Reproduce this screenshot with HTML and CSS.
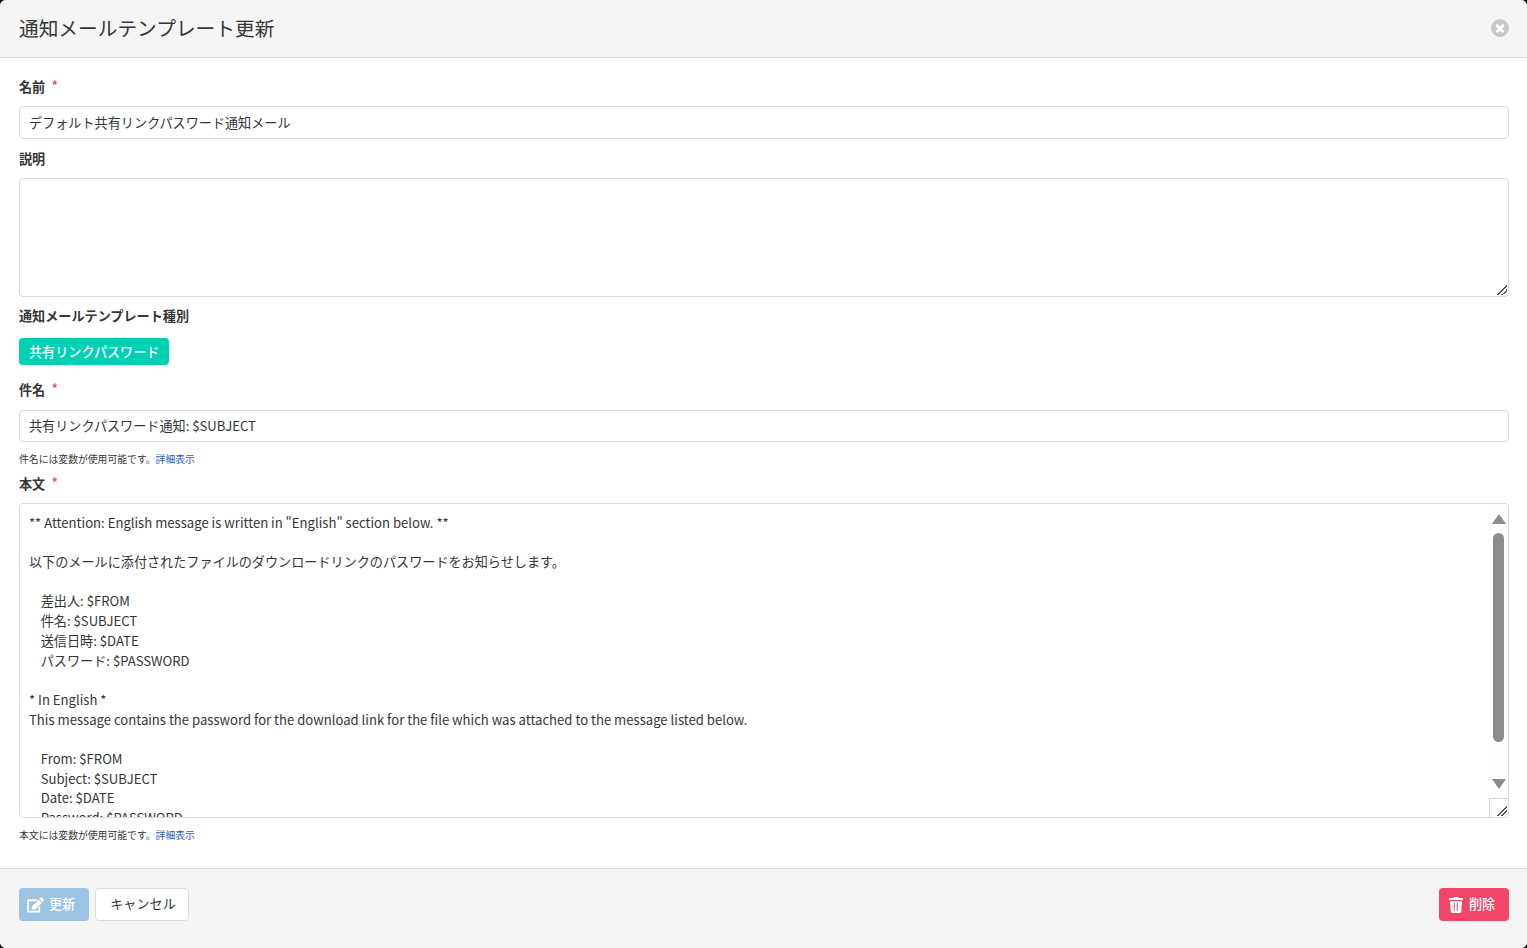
FILE: index.html
```html
<!DOCTYPE html>
<html lang="ja">
<head>
<meta charset="utf-8">
<title>通知メールテンプレート更新</title>
<link rel="stylesheet" href="styles.css">
</head>
<body>
<div class="modal-card">
  <header class="card-head">
    <p class="card-title">通知メールテンプレート更新</p>
    <button class="delete" aria-label="close"></button>
  </header>
  <section class="card-body">
    <div class="label-row name-label"><label class="label">名前</label><span class="req">*</span></div>
    <input class="input name" type="text" value="デフォルト共有リンクパスワード通知メール">
    <div class="label-row desc-label"><label class="label">説明</label></div>
    <textarea class="textarea desc"></textarea>
    <div class="label-row type-label"><label class="label">通知メールテンプレート種別</label></div>
    <div class="tag-row"><span class="tag">共有リンクパスワード</span></div>
    <div class="label-row subject-label"><label class="label">件名</label><span class="req">*</span></div>
    <input class="input subject" type="text" value="共有リンクパスワード通知: $SUBJECT">
    <p class="help subject-help">件名には変数が使用可能です。<a href="#">詳細表示</a></p>
    <div class="label-row body-label"><label class="label">本文</label><span class="req">*</span></div>
    <div class="mail-wrap">
      <textarea class="textarea mail">** Attention: English message is written in "English" section below. **

以下のメールに添付されたファイルのダウンロードリンクのパスワードをお知らせします。

    差出人: $FROM
    件名: $SUBJECT
    送信日時: $DATE
    パスワード: $PASSWORD

* In English *
This message contains the password for the download link for the file which was attached to the message listed below.

    From: $FROM
    Subject: $SUBJECT
    Date: $DATE
    Password: $PASSWORD
</textarea>
      <div class="scrollbar" aria-hidden="true">
        <div class="sb-up"><span class="arrow-up"></span></div>
        <div class="sb-track"><div class="sb-thumb"></div></div>
        <div class="sb-down"><span class="arrow-down"></span></div>
        <div class="sb-corner"></div>
      </div>
    </div>
    <p class="help body-help">本文には変数が使用可能です。<a href="#">詳細表示</a></p>
  </section>
  <footer class="card-foot">
    <div class="foot-left">
      <button class="button primary">
        <svg class="icon" viewBox="0 0 576 512"><path fill="currentColor" d="M402.6 83.2l90.2 90.2c3.8 3.8 3.8 10 0 13.8L274.4 405.6l-92.8 10.3c-12.4 1.4-22.9-9.1-21.5-21.5l10.3-92.8L388.8 83.2c3.8-3.8 10-3.8 13.8 0zm162-22.9l-48.8-48.8c-15.2-15.2-39.9-15.2-55.2 0l-35.4 35.4c-3.8 3.8-3.8 10 0 13.8l90.2 90.2c3.8 3.8 10 3.8 13.8 0l35.4-35.4c15.2-15.3 15.2-40 0-55.2zM384 346.2V448H64V128h229.8c3.2 0 6.2-1.3 8.5-3.5l40-40c7.6-7.6 2.2-20.5-8.5-20.5H48C21.5 64 0 85.5 0 112v352c0 26.5 21.5 48 48 48h352c26.5 0 48-21.5 48-48V306.2c0-10.7-12.9-16-20.5-8.5l-40 40c-2.2 2.3-3.5 5.3-3.5 8.5z"/></svg>
        <span class="btn-text">更新</span>
      </button>
      <button class="button plain">キャンセル</button>
    </div>
    <button class="button danger">
      <svg class="icon trash" viewBox="0 0 448 512"><path fill="currentColor" d="M432 32H312l-9.4-18.7A24 24 0 0 0 281.1 0H166.8a23.72 23.72 0 0 0-21.4 13.3L136 32H16A16 16 0 0 0 0 48v32a16 16 0 0 0 16 16h416a16 16 0 0 0 16-16V48a16 16 0 0 0-16-16zM53.2 467a48 48 0 0 0 47.9 45h245.8a48 48 0 0 0 47.9-45L416 128H32zM152 200a16 16 0 0 1 32 0v224a16 16 0 0 1-32 0zm96 0a16 16 0 0 1 32 0v224a16 16 0 0 1-32 0z"/></svg>
      <span class="btn-text">削除</span>
    </button>
  </footer>
</div>
</body>
</html>
```
FILE: styles.css
```css
html {
  font-size: 13.125px;
  background: #0a0a0a;
}
* { box-sizing: border-box; }
body {
  margin: 0;
  height: 948px;
  overflow: hidden;
  font-family: "Noto Sans CJK JP", "Noto Sans", sans-serif;
  color: #363636;
  line-height: 1.5;
}
.modal-card {
  height: 948px;
  display: flex;
  flex-direction: column;
  border-radius: 6px;
  overflow: hidden;
  background: #fff;
}
.card-head {
  height: 58px;
  flex: none;
  display: flex;
  align-items: center;
  justify-content: space-between;
  padding: 0 18px 2px 19px;
  background: #f5f5f5;
  border-bottom: 1px solid #dbdbdb;
}
.card-title {
  margin: 0;
  font-size: 19.69px;
  line-height: 1;
  color: #363636;
}
.delete {
  width: 18px;
  height: 18px;
  margin-top: 1px;
  padding: 0;
  border: 0;
  border-radius: 50%;
  background: rgba(10, 10, 10, 0.2);
  position: relative;
}
.delete::before,
.delete::after {
  content: "";
  position: absolute;
  left: 4px;
  top: 7.75px;
  width: 10px;
  height: 2.5px;
  background: #fff;
  transform: rotate(45deg);
}
.delete::after { transform: rotate(-45deg); }
.card-body {
  flex: 1;
  display: flex;
  flex-direction: column;
  padding: 19px 18px 0 19px;
  min-height: 0;
}
.label-row {
  display: flex;
  height: 19.5px;
  flex: none;
}
.label {
  font-weight: 700;
  font-size: 13.125px;
  line-height: 19.5px;
  color: #363636;
}
.req {
  margin-left: 6px;
  color: #f14668;
  font-size: 15px;
  line-height: 18px;
}
.input,
.textarea {
  display: block;
  width: 100%;
  font: inherit;
  font-size: 13.125px;
  color: #363636;
  background: #fff;
  border: 1px solid #dbdbdb;
  border-radius: 4px;
  outline: none;
  flex: none;
}
.input {
  height: 32.5px;
  padding: 0 9px;
}
.name { height: 33px; }
.textarea {
  padding: 8.625px 9px;
  line-height: 19.69px;
  resize: vertical;
}
.name-label { margin-bottom: 9px; }
.desc-label { margin-top: 10px; margin-bottom: 9.5px; }
.desc { height: 119px; }
.type-label { margin-top: 9.5px; margin-bottom: 12.5px; }
.tag-row { display: flex; flex: none; }
.tag {
  height: 27px;
  padding: 0 10px;
  display: inline-flex;
  align-items: center;
  background: #00d1b2;
  color: #fff;
  font-size: 13.125px;
  font-weight: 500;
  border-radius: 4px;
}
.subject-label { margin-top: 15px; margin-bottom: 10.5px; }
.subject { height: 32px; padding-bottom: 2px; }
.help {
  margin: 0;
  font-size: 9.84px;
  line-height: 14.6px;
  color: #363636;
}
.help a { color: #3160b5; text-decoration: none; }
.subject-help { margin-top: 9.5px; }
.body-label { margin-top: 8px; margin-bottom: 9.5px; }
.mail-wrap {
  position: relative;
  flex: none;
  height: 315px;
}
.mail { height: 315px; }
.body-help { margin-top: 10px; }

.desc::-webkit-resizer {
  background-image: linear-gradient(135deg, transparent 46%, #555 46% 56%, transparent 56% 70%, #555 70% 80%, transparent 80%);
  background-repeat: no-repeat;
  background-size: 10px 10px;
  background-position: right 1px bottom 1px;
}

/* drawn scrollbar over the mail body */
.scrollbar {
  position: absolute;
  top: 1px;
  right: 1px;
  bottom: 1px;
  width: 19px;
  display: flex;
  flex-direction: column;
  background: #fdfdfd;
  border-radius: 0 3px 3px 0;
  pointer-events: none;
}
.sb-up,
.sb-down {
  flex: none;
  display: flex;
  justify-content: center;
}
.sb-up { height: 29px; padding-top: 10px; }
.sb-down { height: 28px; padding-top: 9px; }
.arrow-up,
.arrow-down {
  width: 0;
  height: 0;
  border-left: 7px solid transparent;
  border-right: 7px solid transparent;
}
.arrow-up { border-bottom: 10px solid #8c8c8c; }
.arrow-down { border-top: 10px solid #8c8c8c; }
.sb-track {
  flex: 1;
  display: flex;
  justify-content: center;
}
.sb-thumb {
  width: 11px;
  height: 209px;
  border-radius: 6px;
  background: #8c8c8c;
}
.sb-corner {
  flex: none;
  height: 19px;
  background-color: #fff;
  border-left: 1px solid #d5d5d5;
  border-top: 1px solid #d5d5d5;
  border-radius: 0 0 3px 0;
  background-image: linear-gradient(135deg, transparent 46%, #555 46% 56%, transparent 56% 70%, #555 70% 80%, transparent 80%);
  background-repeat: no-repeat;
  background-size: 10px 10px;
  background-position: right 1px bottom 1px;
}

.card-foot {
  height: 80px;
  flex: none;
  display: flex;
  justify-content: space-between;
  align-items: flex-start;
  padding: 19px 18px 0 19px;
  background: #f5f5f5;
  border-top: 1px solid #dbdbdb;
}
.foot-left {
  display: flex;
  gap: 6px;
}
.button {
  height: 33px;
  display: inline-flex;
  align-items: center;
  font: inherit;
  font-size: 13.125px;
  line-height: 1;
  white-space: nowrap;
  border-radius: 4px;
  border: 1px solid transparent;
  padding: 0 0 2px;
}
.btn-text { margin-left: 6px; }
.primary {
  width: 70px;
  padding-left: 7px;
  background: #9cc3e3;
  color: #fff;
  font-weight: 500;
}
.primary .btn-text { margin-left: 5px; }
.plain {
  width: 94px;
  justify-content: center;
  padding-left: 2px;
  background: #fff;
  border-color: #dbdbdb;
  color: #363636;
}
.danger {
  width: 70px;
  padding-left: 9px;
  background: #f14668;
  color: #fff;
  font-weight: 500;
}
.icon {
  width: 17px;
  height: 16px;
  flex: none;
  margin-top: 2px;
}
.trash {
  width: 14px;
  height: 16px;
}
```
